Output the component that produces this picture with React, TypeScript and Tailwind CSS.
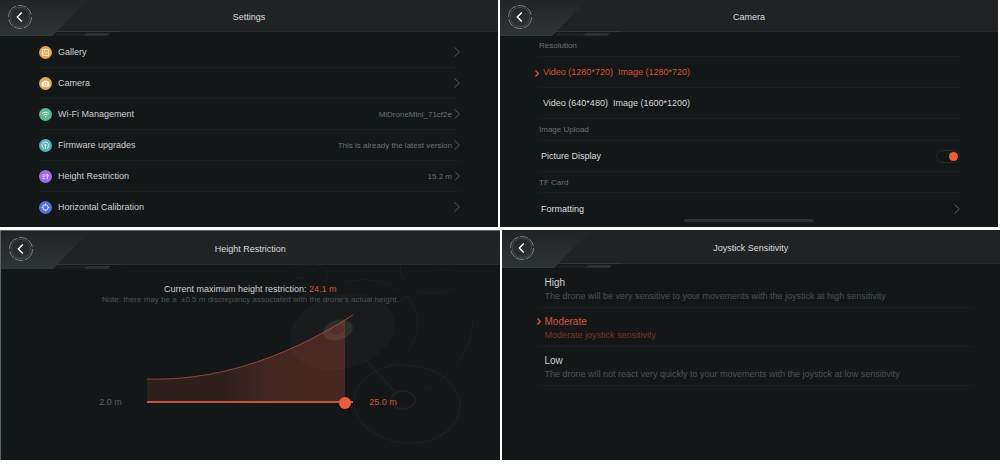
import React, { useState } from 'react';
import { clsx } from 'clsx';

type PanelProps = {
  title: string;
  tall?: boolean;
  className?: string;
  children: React.ReactNode;
};

type SettingRow = {
  label: string;
  value?: string;
  color: string;
  icon: React.ReactNode;
};

const settings: SettingRow[] = [
  {
    label: 'Gallery',
    color: 'bg-[#eba14c]',
    icon: <><rect x="3.5" y="3.8" width="7" height="6.4" rx="0.8" /><path d="M3.8 8.8l2-2 1.7 1.4 2.7-2.4" /><path d="M5 5.5h1.6" /></>,
  },
  {
    label: 'Camera',
    color: 'bg-[#dfab5b]',
    icon: <path fill="currentColor" stroke="none" fillRule="evenodd" d="M5.4 4h3.2l.6 1h1.1c.5 0 .8.3.8.8v3.7c0 .5-.3.8-.8.8H3.7c-.5 0-.8-.3-.8-.8V5.8c0-.5.3-.8.8-.8h1.1zM7 5.5a2 2 0 100 4 2 2 0 000-4zm0 1a1 1 0 110 2 1 1 0 010-2z" />,
  },
  {
    label: 'Wi-Fi Management',
    value: 'MiDroneMini_71cf2e',
    color: 'bg-[#5fb893]',
    icon: <><path d="M3.3 6a5.3 5.3 0 017.4 0M4.7 7.7a3.3 3.3 0 014.6 0" /><circle cx="7" cy="9.4" r="0.8" fill="currentColor" stroke="none" /></>,
  },
  {
    label: 'Firmware upgrades',
    value: 'This is already the latest version',
    color: 'bg-[#53b0b6]',
    icon: <><path d="M5.6 10.4a3.7 3.7 0 112.8 0" /><path d="M7 10.8V5.7M5.4 7.2L7 5.6l1.6 1.6" /></>,
  },
  {
    label: 'Height Restriction',
    value: '15.2 m',
    color: 'bg-[#a76aef]',
    icon: <><path d="M8.9 10V4.8M7.3 6.1l1.6-1.6 1.6 1.6" /><path d="M4 5.2h2M4 7.2h2M4 9.2h2" /></>,
  },
  {
    label: 'Horizontal Calibration',
    color: 'bg-[#5271d6]',
    icon: <><circle cx="7" cy="7" r="2.9" /><path d="M7 2.9v1.5M7 9.6v1.5M2.9 7h1.5M9.6 7h1.5" /></>,
  },
];

const resolutions = [
  { id: 'hd', label: 'Video (1280*720)\u00a0 Image (1280*720)' },
  { id: 'sd', label: 'Video (640*480)\u00a0 Image (1600*1200)' },
];

const sensitivities = [
  { id: 'High', note: 'The drone will be very sensitive to your movements with the joystick at high sensitivity' },
  { id: 'Moderate', note: 'Moderate joystick sensitivity' },
  { id: 'Low', note: 'The drone will not react very quickly to your movements with the joystick at low sensitivity' },
];

const Chevron: React.FC = () => (
  <svg viewBox="0 0 6 10" className="h-2.5 w-1.5 shrink-0 text-[#62666a]" fill="none" stroke="currentColor" strokeWidth="0.9" aria-hidden="true">
    <path d="M0.8 0.5L5.3 5L0.8 9.5" />
  </svg>
);

const ActiveMark: React.FC = () => (
  <svg viewBox="0 0 4 7" className="h-[7px] w-1 shrink-0 text-[#d5533a]" fill="none" stroke="currentColor" strokeWidth="1.2" aria-hidden="true">
    <path d="M0.5 0.5L3.3 3.5L0.5 6.5" />
  </svg>
);

const HeaderArt: React.FC<{ id: string }> = ({ id }) => (
  <svg viewBox="0 0 130 36" className="absolute bottom-[-5px] left-0 h-9 w-[130px]" aria-hidden="true">
    <defs>
      <linearGradient id={`${id}-corner`} x1="0" y1="0" x2="0" y2="1">
        <stop offset="0" stopColor="#222426" />
        <stop offset="1" stopColor="#303436" />
      </linearGradient>
      <pattern id={`${id}-hatch`} width="2" height="3" patternUnits="userSpaceOnUse">
        <path d="M0 3L2 0" stroke="#34383a" strokeWidth="0.6" />
      </pattern>
    </defs>
    <path d="M0 0H87L52 36H0z" fill={`url(#${id}-corner)`} />
    <path d="M0 35.5H52L56 31.5H120" fill="none" stroke="#34383a" strokeWidth="0.8" />
    <path d="M57 33H86L83.5 36H54z" fill={`url(#${id}-hatch)`} />
    <path d="M86 33H110L107 36H83z" fill="#2b2f31" />
  </svg>
);

const Panel: React.FC<PanelProps> = ({ title, tall, className, children }) => (
  <section className={clsx('relative min-w-0 flex-1 overflow-hidden bg-[#141718]', className)}>
    <header className={clsx('relative flex items-center justify-center border-b border-[#28292b] bg-[#212224] pt-0.5', tall ? 'h-[34px]' : 'h-8')}>
      <HeaderArt id={title.replace(/\s/g, '-')} />
      <button type="button" aria-label={`Back from ${title}`} className="absolute left-2 grid size-6 place-items-center text-white">
        <svg viewBox="0 0 24 24" className="size-6" fill="none" stroke="currentColor" aria-hidden="true">
          <circle cx="12" cy="12" r="11.5" stroke="#8d9092" strokeWidth="0.8" strokeDasharray="14 1.5 9 1 8 2.5" />
          <circle cx="12" cy="12" r="9.7" stroke="#55595c" strokeWidth="0.6" />
          <path d="M13.8 7.5L9.3 12l4.5 4.5" strokeWidth="1.4" />
        </svg>
      </button>
      <h2 className="text-[9px] leading-4 text-[#dcdddd]">{title}</h2>
    </header>
    {children}
  </section>
);

const SettingsPanel: React.FC = () => (
  <Panel title="Settings">
    <ul className="pt-[5px] pr-[38px] pb-1 pl-[39px]">
      {settings.map((row) => (
        <li key={row.label} className="border-b border-[#191d1e] last:border-transparent">
          <button type="button" className="flex h-[30px] w-full items-center text-left">
            <span className={clsx('mr-1.5 grid size-[13px] place-items-center rounded-full text-white', row.color)}>
              <svg viewBox="0 0 14 14" className="size-[13px]" fill="none" stroke="currentColor" strokeWidth="0.9" aria-hidden="true">
                {row.icon}
              </svg>
            </span>
            <span className="pt-px text-[9px] text-[#cfd0d0]">{row.label}</span>
            <span className="mr-0.5 ml-auto pt-px text-[8px] text-[#6d7173]">{row.value}</span>
            <Chevron />
          </button>
        </li>
      ))}
    </ul>
  </Panel>
);

const CameraPanel: React.FC = () => {
  const [resolution, setResolution] = useState('hd');
  const [showPictures, setShowPictures] = useState(true);

  return (
    <Panel title="Camera">
      <div className="pr-[38px] pb-0.5 pl-[39px] text-[9px]">
        <h3 className="flex h-[25px] items-center border-b border-[#191d1e] pt-1 text-[8px] text-[#6d7173]">Resolution</h3>
        {resolutions.map((item) => {
          const isActive = resolution === item.id;
          return (
            <label key={item.id} className={clsx('relative flex h-[31px] items-center border-b border-[#191d1e] pt-0.5 pl-1', isActive ? 'text-[#d5533a]' : 'text-[#d6d7d7]')}>
              <input type="radio" name="resolution" className="sr-only" checked={isActive} onChange={() => setResolution(item.id)} />
              {isActive && <span className="absolute -left-1"><ActiveMark /></span>}
              {item.label}
            </label>
          );
        })}
        <h3 className="flex h-[22px] items-center border-b border-[#191d1e] text-[8px] text-[#6d7173]">Image Upload</h3>
        <div className="flex h-[31px] items-center justify-between border-b border-[#191d1e] pl-0.5">
          <label htmlFor="picture-display" className="pt-0.5 text-[#dedfdf]">Picture Display</label>
          <input
            id="picture-display"
            type="checkbox"
            role="switch"
            checked={showPictures}
            onChange={(event) => setShowPictures(event.target.checked)}
            className="flex h-[13px] w-6 appearance-none items-center rounded-full border border-[#26292b] px-px before:size-[9px] before:rounded-full before:bg-[#5b5f62] checked:justify-end checked:before:bg-[#ec5c41]"
          />
        </div>
        <h3 className="flex h-[21px] items-center border-b border-[#191d1e] pt-px text-[8px] text-[#6d7173]">TF Card</h3>
        <button type="button" className="flex h-8 w-full items-center justify-between pl-0.5 text-left text-[#dedfdf]">
          <span className="pt-0.5">Formatting</span>
          <Chevron />
        </button>
      </div>
      <span className="absolute bottom-[5px] left-[37%] h-[3px] w-[26%] rounded-full bg-[#2c2f31]" />
    </Panel>
  );
};

const DroneArt: React.FC = () => (
  <svg viewBox="0 0 200 200" className="absolute top-[34px] right-0 size-[200px] overflow-visible text-[#1b1f20]" fill="none" stroke="currentColor" strokeWidth="1" aria-hidden="true">
    <path d="M-24 24C-24 8-4-1 14 0C28 0 32 12 20 22C6 34-22 38-24 24z" />
    <ellipse cx="-2" cy="18" rx="8" ry="5" transform="rotate(-25 -2 18)" />
    <path d="M101 0c-6 24 30 36 52 23" />
    <path d="M134 0c0 7 18 8 20 0" />
    <path d="M45 18c28-10 60 4 70 26c8 22-4 50-33 59" />
    <path d="M173 55c-1 24-12 42-26 54c-8 8-16 14-26 18" />
    <path d="M77 46l34-15M18 42l26 25" />
    <ellipse cx="42" cy="67" rx="53" ry="36" transform="rotate(-15 42 67)" fill="#191b1c" stroke="#1b1e1f" />
    <ellipse cx="38" cy="65" rx="15" ry="10" transform="rotate(-15 38 65)" fill="#2c2e2f" stroke="none" />
    <ellipse cx="38" cy="65" rx="7" ry="4" transform="rotate(-20 38 65)" fill="#202224" stroke="none" />
    <path d="M47 74l49 54" strokeWidth="1.5" />
    <ellipse cx="107" cy="139" rx="53" ry="39" transform="rotate(5 107 139)" stroke="#1d2122" />
    <ellipse cx="103" cy="135" rx="12" ry="9" strokeWidth="2" stroke="#1d2122" />
  </svg>
);

const HeightPanel: React.FC = () => {
  const [height, setHeight] = useState(24.1);
  const handleX = ((height - 2) / 23) * 206;

  return (
    <Panel title="Height Restriction" tall className="border-t border-l border-[#5f6464]">
      <DroneArt />
      <div className="relative pt-[18px] pb-[51px]">
        <p className="text-center text-[9px] leading-[12px] text-[#cfd0d0]">
          Current maximum height restriction: <output htmlFor="max-height" className="text-[#d5533a]">{height.toFixed(1)} m</output>
        </p>
        <p className="text-center text-[8px] leading-[10px] text-[#4d5153]">
          Note: there may be a &nbsp;±0.5 m discrepancy associated with the drone's actual height.
        </p>
        <div className="mt-[9px] flex items-end justify-center text-[9px] leading-[13px]">
          <span className="w-12 text-[#5b5f61]">2.0 m</span>
          <div className="relative w-[206px] pb-1.5">
            <svg viewBox="0 0 206 89" className="block h-auto w-full" aria-hidden="true">
              <defs>
                <linearGradient id="height-fill">
                  <stop offset="0" stopColor="#ec5c41" stopOpacity="0.12" />
                  <stop offset="0.38" stopColor="#ec5c41" stopOpacity="0.13" />
                  <stop offset="0.6" stopColor="#ec5c41" stopOpacity="0.22" />
                  <stop offset="1" stopColor="#ec5c41" stopOpacity="0.24" />
                </linearGradient>
                <clipPath id="height-range">
                  <rect width={handleX} height="89" />
                </clipPath>
              </defs>
              <path d="M0 65C64 67 132 48 206 1V89H0z" fill="url(#height-fill)" clipPath="url(#height-range)" />
              <path d="M0 65C64 67 132 48 206 1" fill="none" stroke="#a34a38" strokeWidth="0.9" />
              <path d="M0 88H206" stroke="#c45340" strokeWidth="2" />
            </svg>
            <input
              id="max-height"
              type="range"
              aria-label="Maximum height"
              min={2}
              max={25}
              step={0.1}
              value={height}
              onChange={(event) => setHeight(Number(event.target.value))}
              className="absolute bottom-0 -left-1.5 h-3 w-[218px] appearance-none bg-transparent [&::-webkit-slider-thumb]:size-3 [&::-webkit-slider-thumb]:appearance-none [&::-webkit-slider-thumb]:rounded-full [&::-webkit-slider-thumb]:bg-[#ec5c41]"
            />
          </div>
          <span className="w-12 pl-4 whitespace-nowrap text-[#d5533a]">25.0 m</span>
        </div>
      </div>
    </Panel>
  );
};

const JoystickPanel: React.FC = () => {
  const [sensitivity, setSensitivity] = useState('Moderate');

  return (
    <Panel title="Joystick Sensitivity" tall>
      <div className="pt-[5px] pr-[27px] pb-[74px] pl-[35px]">
        {sensitivities.map(({ id, note }) => {
          const isActive = sensitivity === id;
          return (
            <label key={id} className="relative block h-[39px] border-b border-[#191d1e] pt-[7px] pl-2">
              <input type="radio" name="sensitivity" className="sr-only" checked={isActive} onChange={() => setSensitivity(id)} />
              {isActive && <span className="absolute top-2.5 left-0"><ActiveMark /></span>}
              <span className={clsx('block text-[10px] leading-[14px]', isActive ? 'text-[#d5533a]' : 'text-[#cfd0d0]')}>{id}</span>
              <span className={clsx('block text-[9px] leading-[13px]', isActive ? 'text-[#7a332a]' : 'text-[#4d5153]')}>{note}</span>
            </label>
          );
        })}
      </div>
    </Panel>
  );
};

const App: React.FC = () => (
  <main className="flex flex-col gap-[3px] bg-white pb-[3px] font-['Liberation_Sans',sans-serif]">
    <div className="flex gap-0.5 pr-0.5">
      <SettingsPanel />
      <CameraPanel />
    </div>
    <div className="flex gap-0.5">
      <HeightPanel />
      <JoystickPanel />
    </div>
  </main>
);

export default App;
